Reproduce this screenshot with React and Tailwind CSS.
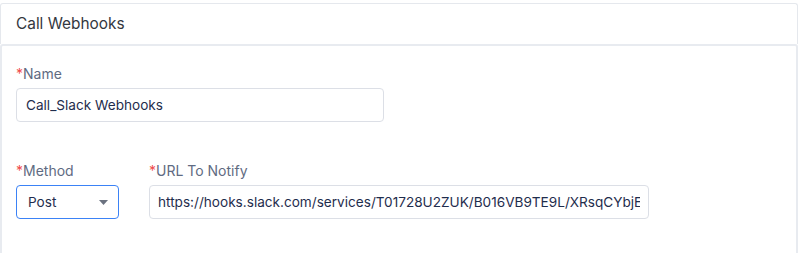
import React from "react";

function Label({ children }) {
  return (
    <div className="text-[14px] leading-[20px] text-[#5f6b82]">
      <span className="text-[#f04b4b]">*</span>
      {children}
    </div>
  );
}

export default function App() {
  return (
    <div
      className="w-[800px] h-[253px] bg-white overflow-hidden pt-[3px] pr-[2px]"
      style={{ fontFamily: "Inter, 'Noto Sans', sans-serif" }}
    >
      <div className="h-[41px] border border-b-0 border-[#e5e8ed] rounded-t-[3px] flex items-center px-[15px]">
        <span className="text-[15.4px] text-[#333740]">Call Webhooks</span>
      </div>
      <div className="h-[220px] border-2 border-[#e8ebf0] rounded-[3px] pt-[18px] px-[14px]">
        <Label>Name</Label>
        <div className="mt-[4px] w-[368px] h-[34px] border border-[#dcdfe6] rounded-[4px] flex items-center px-[9px] text-[13.6px] text-[#1f2d4d]">
          Call_Slack Webhooks
        </div>
        <div className="mt-[39px] flex gap-[30px]">
          <div>
            <Label>Method</Label>
            <div className="mt-[4px] w-[103px] h-[34px] border border-[#3b82f6] rounded-[4px] flex items-center justify-between pl-[11px] pr-[10px] text-[13.6px] text-[#1f2d4d]">
              <span>Post</span>
              <svg width="9" height="5" viewBox="0 0 9 5">
                <path d="M0 0 L9 0 L4.5 5 Z" fill="#6b7280" />
              </svg>
            </div>
          </div>
          <div>
            <Label>URL To Notify</Label>
            <div className="mt-[4px] w-[500px] h-[34px] border border-[#dcdfe6] rounded-[4px] flex items-center pl-[8px] pr-[8px] text-[13.6px] text-[#1f2d4d] overflow-hidden whitespace-nowrap">
              <span className="overflow-hidden">https://hooks.slack.com/services/T01728U2ZUK/B016VB9TE9L/XRsqCYbjE</span>
            </div>
          </div>
        </div>
      </div>
    </div>
  );
}
